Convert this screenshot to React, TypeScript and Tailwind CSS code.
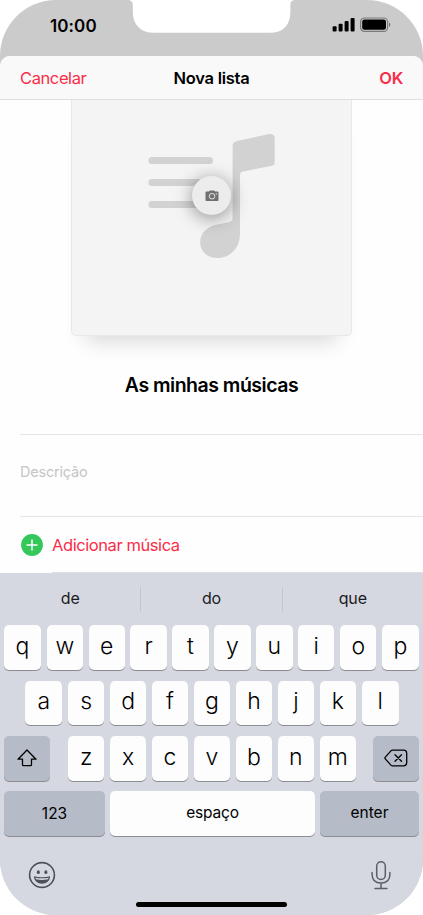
import { clsx } from "clsx";

const TOP_ROW = ["q", "w", "e", "r", "t", "y", "u", "i", "o", "p"];
const HOME_ROW = ["a", "s", "d", "f", "g", "h", "j", "k", "l"];
const BOTTOM_ROW = ["z", "x", "c", "v", "b", "n", "m"];
const SUGGESTIONS = ["de", "do", "que"];

function StatusBar() {
  return (
    <div className="relative flex h-[56px] shrink-0 items-start justify-between pl-[50px] pr-[32px]">
      <svg className="absolute left-[127px] top-0" width="170" height="34" viewBox="0 0 170 34">
        <path
          d="M0 0C4 0 5.8 1.5 5.8 5V12C5.8 25 14 32.8 27 32.8H143C156 32.8 163.4 25 163.4 12V5C163.4 1.5 165 0 169 0Z"
          fill="#fff"
        />
      </svg>
      <span className="mt-[16px] text-[17px] font-semibold leading-[20px] tracking-[0.1px] text-black">10:00</span>
      <div className="mt-[17px] flex items-start gap-[5px]">
        <svg width="23" height="15" viewBox="0 0 23 15">
          <rect x="0.6" y="9.2" width="4" height="5.2" rx="1" />
          <rect x="6.6" y="6.8" width="4" height="7.6" rx="1" />
          <rect x="12.6" y="4" width="4" height="10.4" rx="1" />
          <rect x="18.6" y="1" width="4" height="13.4" rx="1" />
        </svg>
        <svg width="31" height="15" viewBox="0 0 31 15">
          <rect x="0.6" y="1" width="27" height="13.4" rx="4" fill="none" stroke="#000" strokeOpacity="0.4" strokeWidth="1.2" />
          <rect x="2.2" y="2.6" width="23.8" height="10.2" rx="2.5" />
          <path d="M29 5.5C30.8 6.2 30.8 9.2 29 9.9Z" fillOpacity="0.45" />
        </svg>
      </div>
    </div>
  );
}

function Artwork() {
  return (
    <div className="relative mx-auto h-[236px] w-[281px] shrink-0 rounded-b-[5px] border border-t-0 border-[#e8e8e8] bg-[#f4f4f4] shadow-[0_20px_20px_-15px_rgba(0,0,0,0.16)]">
      <svg className="absolute left-0 top-0" width="279" height="235" viewBox="72 100 279 235" fill="#d2d2d2">
        <rect x="148.4" y="157" width="64.6" height="7" rx="3.5" />
        <rect x="148.4" y="179" width="64.6" height="7" rx="3.5" />
        <rect x="148.4" y="201" width="64.6" height="7" rx="3.5" />
        <path d="M237 141L269.500 134C272.500 133.400 274.700 135 274.700 138V162.500C274.700 164.500 273.800 165.300 272 165.700L243 171.500C241 172 240 173 240 175V234C240 248 230 258 217.500 258C207.500 258 200.200 251.500 200.200 242.500C200.200 232 208 226 218.500 224.200L228 222.500C231.500 221.800 232.600 220.500 232.600 217V146C232.600 143 234 141.700 237 141Z" />
      </svg>
      <button
        type="button"
        className="absolute left-[120px] top-[76px] flex h-[39px] w-[39px] items-center justify-center rounded-full bg-[#ececec] shadow-[0_3px_18px_rgba(0,0,0,0.42)]"
      >
        <svg width="14" height="12" viewBox="0 0 14 12">
          <path
            d="M1.300 1.500H3.800L4.800 0.500H9.200L10.200 1.500H12.700Q13.500 1.500 13.500 2.300V10.200Q13.500 11 12.700 11H1.300Q0.500 11 0.500 10.200V2.300Q0.500 1.500 1.300 1.500Z"
            fill="#707070"
          />
          <circle cx="7" cy="6.200" r="2.800" fill="none" stroke="#ececec" strokeWidth="0.900" />
          <circle cx="11.300" cy="3.900" r="0.700" fill="#ececec" />
        </svg>
      </button>
    </div>
  );
}

function Key({ label, wide }: { label: string; wide?: boolean }) {
  return (
    <button
      type="button"
      className={clsx(
        "flex h-[44.500px] items-center justify-center rounded-[5px] bg-[#fdfdfd] pb-[2px] text-[23px] font-light leading-none text-black shadow-[0_1px_0_#8b8d92]",
        wide ? "w-[37px]" : "w-[36.300px]"
      )}
    >
      {label}
    </button>
  );
}

function Keyboard() {
  return (
    <div className="flex h-[342px] shrink-0 flex-col bg-[#d5d8e0]">
      <div className="flex h-[52.300px] shrink-0 items-center">
        {SUGGESTIONS.map((word, i) => (
          <div
            key={word}
            className={clsx(
              "flex h-[25px] flex-1 items-center justify-center pb-[2px] text-[16px] leading-none tracking-[-0.1px] text-[#1c1c1e]",
              i > 0 && "border-l border-[#c3c6ce]"
            )}
          >
            {word}
          </div>
        ))}
      </div>

      <div className="flex flex-col gap-[10.900px] px-[4px]">
        <div className="flex justify-between">
          {TOP_ROW.map((k, i) => (
            <Key key={k} label={k} wide={i === 0 || i === 9} />
          ))}
        </div>
        <div className="flex justify-between pl-[21.300px] pr-[20.300px]">
          {HOME_ROW.map((k, i) => (
            <Key key={k} label={k} wide={i === 0 || i === 8} />
          ))}
        </div>
        <div className="flex justify-between">
          <button
            type="button"
            className="flex h-[44.500px] w-[46px] items-center justify-center rounded-[5px] bg-[#b5bbc7] shadow-[0_1px_0_#8b8d92]"
          >
            <svg width="22" height="20" viewBox="0 0 22 20" fill="none" stroke="#000" strokeWidth="1.300" strokeLinejoin="round">
              <path d="M11 2L20 11.200H15.500V16.500Q15.500 17.700 14.300 17.700H7.700Q6.500 17.700 6.500 16.500V11.200H2Z" />
            </svg>
          </button>
          <div className="ml-px flex w-[288px] justify-between">
            {BOTTOM_ROW.map((k) => (
              <Key key={k} label={k} />
            ))}
          </div>
          <button
            type="button"
            className="flex h-[44.500px] w-[46px] items-center justify-center rounded-[5px] bg-[#b5bbc7] shadow-[0_1px_0_#8b8d92]"
          >
            <svg width="24" height="18" viewBox="0 0 24 18" fill="none" stroke="#000" strokeWidth="1.300" strokeLinecap="round" strokeLinejoin="round">
              <path d="M8.500 1.200H19.500Q22.700 1.200 22.700 4.200V13.800Q22.700 16.800 19.500 16.800H8.500Q7.600 16.800 6.900 16.100L1.300 9.900Q0.500 9 1.300 8.100L6.900 1.900Q7.600 1.200 8.500 1.200Z" />
              <path d="M11 5.700L17.500 12.300M17.500 5.700L11 12.300" />
            </svg>
          </button>
        </div>
        <div className="flex justify-between text-[15.500px] leading-none text-black">
          <button type="button" className="h-[44.500px] w-[101px] rounded-[5px] bg-[#b5bbc7] shadow-[0_1px_0_#8b8d92]">
            123
          </button>
          <button type="button" className="h-[44.500px] w-[204.500px] rounded-[5px] bg-[#fdfdfd] pb-[1.500px] tracking-[-0.2px] shadow-[0_1px_0_#8b8d92]">
            espaço
          </button>
          <button type="button" className="h-[44.500px] w-[99px] rounded-[5px] bg-[#b5bbc7] pb-[1.500px] shadow-[0_1px_0_#8b8d92]">
            enter
          </button>
        </div>
      </div>

      <div className="mt-[23px] flex h-[32px] items-center justify-between pl-[28px] pr-[31px]">
        <svg width="28" height="28" viewBox="0 0 28 28">
          <circle cx="14" cy="14" r="12.400" fill="none" stroke="#4d5158" strokeWidth="1.600" />
          <ellipse cx="10.300" cy="11.200" rx="1.500" ry="1.900" fill="#4d5158" />
          <ellipse cx="17.900" cy="11.200" rx="1.500" ry="1.900" fill="#4d5158" />
          <path d="M5.900 15.300Q14 17 22.100 15.300C21.800 20 18.500 22.700 14 22.700S6.200 20 5.900 15.300Z" fill="#4d5158" />
          <path d="M7.300 16.700Q14 18 20.700 16.700L20 18.300Q14 19.600 8 18.300Z" fill="#d5d8e0" />
        </svg>
        <svg width="22" height="30" viewBox="0 0 22 30" fill="none" stroke="#5b5f67" strokeWidth="1.500" strokeLinecap="round">
          <rect x="6.700" y="1.700" width="8.600" height="17.800" rx="4.300" />
          <path d="M2.100 12.500V14.300C2.100 20 5.500 23.100 11 23.100S19.900 20 19.900 14.300V12.500M11 23.100V28.400M5 28.600H17" />
        </svg>
      </div>
      <div className="mx-auto mt-[11px] h-[5px] w-[151px] rounded-full bg-black" />
    </div>
  );
}

export default function App() {
  return (
    <div className="h-[915px] w-[423px] overflow-hidden bg-white font-['Inter','Liberation_Sans',sans-serif]">
      <div className="flex h-full flex-col overflow-hidden rounded-[56px] bg-[#cbcbcb]">
        <StatusBar />

        <main className="flex h-[517px] shrink-0 flex-col rounded-t-[10px] bg-[#fefefe]">
          <header className="relative z-10 grid h-[44px] shrink-0 grid-cols-3 items-center rounded-t-[10px] border-b border-[#e0e0e0] bg-[#f9f9f9] px-[20px] pt-[2px] text-[16.500px] leading-none">
            <button type="button" className="text-left tracking-[-0.4px] text-[#fa2d48]">
              Cancelar
            </button>
            <h1 className="text-center font-semibold tracking-[-0.25px] text-black">Nova lista</h1>
            <button type="button" className="text-right font-semibold tracking-[-0.3px] text-[#fa2d48]">
              OK
            </button>
          </header>

          <Artwork />

          <h2 className="mt-[37px] text-center text-[19.500px] font-semibold leading-[24px] tracking-[-0.5px] text-black">
            As minhas músicas
          </h2>

          <div className="ml-[20px] mt-[37px] flex h-[83px] shrink-0 items-center border-y border-[#e5e5e6] pb-[6px] text-[14.500px] leading-none tracking-[-0.2px] text-[#c5c5c7]">
            Descrição
          </div>

          <div className="flex h-[55px] items-center pl-[21px]">
            <svg width="22" height="22" viewBox="0 0 22 22">
              <circle cx="11" cy="11" r="10.900" fill="#34c759" />
              <path d="M11 6V16M6 11H16" stroke="#fff" strokeWidth="1.500" strokeLinecap="round" />
            </svg>
            <span className="ml-[9px] pt-[2px] text-[16.500px] leading-none tracking-[-0.42px] text-[#fa2d48]">Adicionar música</span>
          </div>
          <div className="ml-[52px] h-px bg-[#dedee0]" />
        </main>

        <Keyboard />
      </div>
    </div>
  );
}
